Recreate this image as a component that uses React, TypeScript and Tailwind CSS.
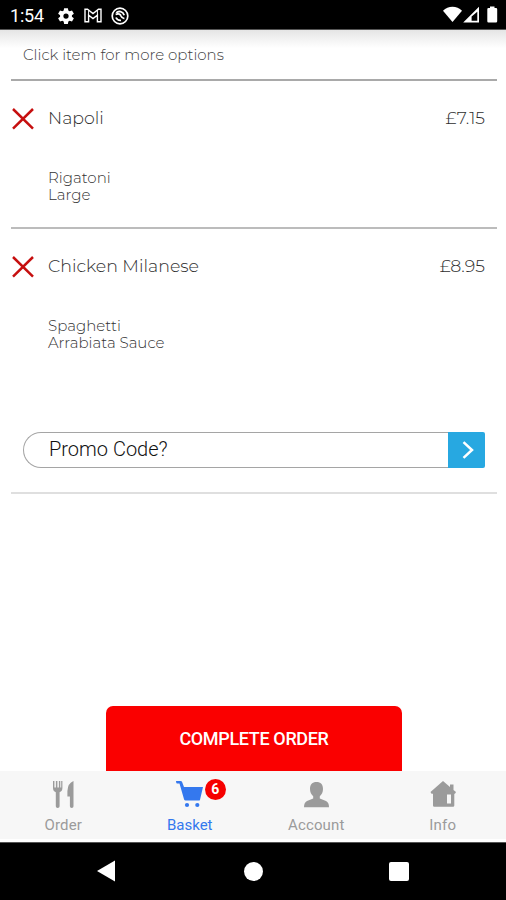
import React from 'react';
import { clsx } from 'clsx';

interface BasketItem {
  name: string;
  price: string;
  options: string[];
}

const items: BasketItem[] = [
  { name: 'Napoli', price: '£7.15', options: ['Rigatoni', 'Large'] },
  { name: 'Chicken Milanese', price: '£8.95', options: ['Spaghetti', 'Arrabiata Sauce'] },
];

function StatusBar() {
  return (
    <header className="flex h-[30px] shrink-0 items-center justify-between border-b border-[#555] bg-black pl-[10px] pr-2 text-white">
      <div className="flex items-center pt-0.5">
        <span className="w-[47px] font-[Roboto] text-[18px] leading-none tracking-[-0.2px]">1:54</span>
        <svg className="h-[18px] w-[18px]" viewBox="0 0 24 24" fill="currentColor">
          <path
            fillRule="evenodd"
            d="M9.500 1.500h5l.6 3.300 1.800 1 3.100-1.200 2.500 4.300-2.600 2.100v2l2.600 2.100-2.500 4.300-3.100-1.200-1.800 1-.6 3.300h-5l-.6-3.300-1.800-1L4 19.400l-2.500-4.300L4.100 13v-2L1.500 8.900 4 4.600l3.100 1.200 1.800-1ZM12 8.500a3.500 3.500 0 1 0 0 7 3.500 3.500 0 0 0 0-7Z"
          />
        </svg>
        <svg className="ml-[9px] h-[15px] w-[18px]" viewBox="0 0 18 15" fill="none" stroke="currentColor" strokeWidth="1.400">
          <path d="M1 1.300h2.500L9 5.600l5.500-4.300H17v12.400h-3.600V7.200L9 10.600 4.600 7.200v6.500H1Z" />
          <path d="M4.600 7V2.300M13.400 7V2.300" strokeWidth="1" />
        </svg>
        <svg className="ml-[9px] h-[18px] w-[18px]" viewBox="0 0 18 18" fill="none" stroke="currentColor">
          <circle cx="9" cy="9" r="7.800" strokeWidth="1.700" />
          <path d="M5.200 5.800C7.500 3.600 12 4.200 13.200 8.200M4.600 7.400C8 6 9.500 7.400 10 9c.5 1.400 1.500 2.300 3.400 2.600M5 10.500c.8 2 2.600 3.100 5 2.900" strokeWidth="1.800" />
        </svg>
      </div>
      <svg className="h-[17px] w-[55px]" viewBox="0 0 55 17" fill="currentColor">
        <path d="M0 4.800C5-.7 14-.7 19 4.800L9.500 16Z" />
        <path fillRule="evenodd" d="M36 .8V16.500H20.200Zm-1.700 5L28.600 10.500V14.800h5.700Z" />
        <path d="M47 2V.5h4.500V2H53q1.200 0 1.200 1.200v12q0 1.300-1.200 1.300h-7.500q-1.200 0-1.200-1.300v-12Q44.300 2 45.500 2Z" />
      </svg>
    </header>
  );
}

function ItemRow({ item }: { item: BasketItem }) {
  return (
    <li className="flex h-[148px] pt-[26px] pr-3">
      <button className="mt-px h-[22px] w-[37px] shrink-0" aria-label="Remove">
        <svg className="h-[22px] w-[23px]" viewBox="0 0 23 22" fill="none" stroke="#c60f0f" strokeWidth="2.500">
          <path d="m2 1 20 19.600M22 1 2 20.600" />
        </svg>
      </button>
      <div className="flex-1">
        <div className="flex justify-between text-[17.400px] leading-[22px] font-light text-[#2e2e2e]">
          <span>{item.name}</span>
          <span>{item.price}</span>
        </div>
        <p className="mt-10 whitespace-pre-line text-[15px] leading-[17px] font-light text-[#333]">
          {item.options.join('\n')}
        </p>
      </div>
    </li>
  );
}

function PromoCode() {
  return (
    <div className="mx-3 flex h-9">
      <div className="flex flex-1 items-center rounded-l-full border border-r-0 border-[#a5a5a5] pb-0.5 pl-[25px] font-[Roboto] text-[20px] leading-none font-light text-[#111]">
        Promo Code?
      </div>
      <button className="flex w-[37px] items-center justify-center rounded-r-[2px] bg-[#27a8e1]" aria-label="Apply">
        <svg className="ml-0.5 h-[18px] w-3" viewBox="0 0 12 18" fill="none" stroke="white" strokeWidth="2.500">
          <path d="m1.500 1.200 8.500 7.800-8.500 7.800" />
        </svg>
      </button>
    </div>
  );
}

const tabs = [
  {
    label: 'Order',
    labelClass: 'tracking-[0.1px]',
    icon: (
      <svg className="h-7 w-7" viewBox="0 0 28 28" fill="currentColor">
        <path d="M4 0h1.400v6.500h1.500V0h1.500v6.500h1.500V0h1.400v6.500h.9V0h1.200v7q0 3.300-2.800 4.200v14q0 1.800-1.900 1.800t-1.900-1.800v-14Q4 10.300 4 7Z" />
        <path d="M24.500 0v25.200q0 1.800-1.800 1.800t-1.800-1.800V15.500h-2.500V10q.5-8 6.100-10Z" />
      </svg>
    ),
  },
  {
    label: 'Basket',
    labelClass: 'tracking-normal',
    badge: 6,
    icon: (
      <svg className="h-7 w-7" viewBox="0 0 28 28" fill="currentColor">
        <path d="M0 0h4.500q1.300 0 1.700 1.200L8 6h19L24 18.700q-.2.900-1.200.9H9.500q-1 0-1.400-1L3.500 2.400H.8Q0 2 0 0Z" />
        <circle cx="11" cy="24" r="2.100" />
        <circle cx="21.300" cy="24" r="2.100" />
      </svg>
    ),
  },
  {
    label: 'Account',
    labelClass: 'tracking-[0.150px]',
    icon: (
      <svg className="h-7 w-7" viewBox="0 0 28 28" fill="currentColor">
        <path d="M14.500 1c4.200 0 6.500 2.600 6.500 7 0 3-1.300 5.700-3.200 7.200v2.200l6.200 2.500q3 1.300 3 6.400H2q0-5.100 3-6.400l6.200-2.500v-2.200C9.300 13.700 8 11 8 8c0-4.400 2.300-7 6.500-7Z" />
      </svg>
    ),
  },
  {
    label: 'Info',
    labelClass: 'tracking-[0.2px]',
    icon: (
      <svg className="h-7 w-7" viewBox="0 0 28 28" fill="currentColor">
        <path fillRule="evenodd" d="M14 0 21 6V3.500h3.500V9l2.500 2-1 1.700H25.300v11.800q0 1.200-1.200 1.200H5.200Q4 25.700 4 24.500V12.700H2.500L1.500 11ZM18 13.500v9h4v-9Z" />
      </svg>
    ),
  },
];

function TabBar() {
  return (
    <nav className="flex h-[71px] shrink-0 border-b-[3px] border-white bg-[#f7f7f7]">
      {tabs.map((tab) => (
        <button
          key={tab.label}
          className={clsx(
            'flex flex-1 flex-col items-center pt-[10px]',
            tab.badge ? 'text-[#3478ee]' : 'text-[#9b9b9b]'
          )}
        >
          <span className="relative">
            {tab.icon}
            {tab.badge && (
              <span className="absolute -top-[2px] left-[29px] flex h-[21px] w-[21px] items-center justify-center rounded-full bg-[#f60000] font-[Roboto] text-[14px] font-bold text-white">
                {tab.badge}
              </span>
            )}
          </span>
          <span className={clsx('mt-[7px] font-[Roboto] text-[15px] leading-[18px]', tab.labelClass)}>{tab.label}</span>
        </button>
      ))}
    </nav>
  );
}

function SystemNav() {
  return (
    <footer className="flex h-[58px] shrink-0 items-center justify-between border-t border-[#555] bg-black pr-[97px] pb-px pl-24 text-white">
      <svg className="h-[22px] w-[20px]" viewBox="0 0 20 22" fill="currentColor">
        <path d="M1 11 19 .5v21Z" />
      </svg>
      <span className="ml-0.5 h-[19px] w-[19px] rounded-full bg-white" />
      <span className="h-[19px] w-5 rounded-[2px] bg-white" />
    </footer>
  );
}

export default function App() {
  return (
    <div className="flex h-[900px] w-[506px] flex-col overflow-hidden bg-white font-[Montserrat,Inter,sans-serif]">
      <StatusBar />
      <main className="flex flex-1 flex-col bg-linear-to-b from-[#e5e5e5] to-white to-[18px] pr-[9px] pl-[11px]">
        <p className="h-[51px] border-b-2 border-[#a9a9a9] pt-[15px] pl-3 text-[15px] leading-[20px] font-light text-[#3d3d3d]">
          Click item for more options
        </p>
        <ul className="divide-y-2 divide-[#bcbcbc]">
          {items.map((item) => (
            <ItemRow key={item.name} item={item} />
          ))}
        </ul>
        <div className="mt-[55px] border-b-2 border-[#dfdfdf] pb-6">
          <PromoCode />
        </div>
        <button className="mx-auto mt-auto h-[65px] w-[296px] rounded-t-[7px] bg-[#fa0000] font-[Roboto] text-[18px] font-medium tracking-[-0.350px] text-white">
          COMPLETE ORDER
        </button>
      </main>
      <TabBar />
      <SystemNav />
    </div>
  );
}
